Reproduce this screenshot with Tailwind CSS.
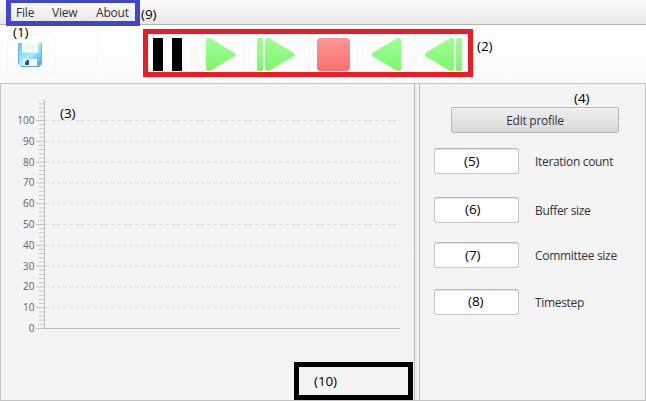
<!DOCTYPE html>
<html lang="en">
<head>
<meta charset="utf-8">
<title>Simulation</title>
<script src="https://cdn.jsdelivr.net/npm/@tailwindcss/browser@4"></script>
</head>
<body class="relative flex h-[401px] w-[646px] flex-col overflow-hidden bg-[#fdfdfd] font-['Open_Sans','Noto_Sans',sans-serif] text-[12px] leading-4 text-[#333]">
  <!-- Menu bar -->
  <nav class="flex h-[25px] shrink-0 items-center border-b border-[#b5b5b5] bg-linear-to-b from-[#fdfdfd] to-[#e7e7e7] pl-4 pt-[2px]">
    <span class="w-9 tracking-[-0.2px]">File</span>
    <span class="w-11 tracking-[-0.2px]">View</span>
    <span class="tracking-[-0.2px]">About</span>
  </nav>

  <!-- Toolbar -->
  <div class="flex h-[58px] shrink-0 items-center bg-linear-to-b from-white to-[#fbfbfb] pl-[7px]">
    <button class="flex h-10 w-12 items-center justify-center rounded-sm border border-[#f7f7f7]">
      <svg class="-ml-[2px] mt-px" width="24" height="25" viewBox="0 0 24 25">
        <defs>
          <linearGradient id="disk" x1="0" y1="0" x2="1" y2="1"><stop offset="0" stop-color="#6fbde9"/><stop offset=".5" stop-color="#a5f0fc"/><stop offset="1" stop-color="#4a9be0"/></linearGradient>
        </defs>
        <path d="M0 1h24v21l-3 3H3l-3-3z" fill="url(#disk)"/>
        <path d="M.5 1v21M23.500 1v20" stroke="#68b8ea"/>
        <path d="M4 0h16v10.500H4z" fill="#f9fdff"/>
        <path d="M5 3.500h14M5 5.500h14M5 7.500h14" stroke="#e6f2f7"/>
        <path d="M5 17h14v7H5z" fill="#fafdff"/>
        <path d="M7 20l2-2h2v5H7z" fill="#2855ac"/>
        <path d="M3 24.500h18" stroke="#5aa9e0"/>
      </svg>
    </button>
    <div class="ml-[42px] h-12 w-px bg-[#f8f8f8]"></div>
    <svg class="ml-[46px]" width="329" height="48" viewBox="144 30 329 48">
      <defs>
        <linearGradient id="green" x1="0" y1="0" x2="0" y2="1"><stop offset="0" stop-color="#a0ff96"/><stop offset="1" stop-color="#7cf76c"/></linearGradient>
        <linearGradient id="red" x1="0" y1="0" x2="0" y2="1"><stop offset="0" stop-color="#ff9696"/><stop offset="1" stop-color="#f97070"/></linearGradient>
      </defs>
      <g fill="none" stroke="#f7f7f7">
        <path d="M191.500 35v38M196.500 35v38M244.500 35v38M249.500 35v38M304.500 35v38M309.500 35v38M357.500 35v38M362.500 35v38M410.500 35v38M415.500 35v38"/>
      </g>
      <path d="M153 38h10v33h-10zM172 38h10v33h-10z" fill="#000"/>
      <path d="M206 40.500Q206 38 208.500 38Q210.200 38 211.500 39L234 52.500Q237 54.500 234 56.500L211.500 70Q210.200 71 208.500 71Q206 71 206 68.500Z" fill="url(#green)"/>
      <rect x="257" y="38" width="6" height="33" rx="1.500" fill="url(#green)"/>
      <path d="M265 40.500Q265 38 267.500 38Q269.200 38 270.500 39L293 52.500Q296.500 54.500 293 56.500L270.500 70Q269.200 71 267.500 71Q265 71 265 68.500Z" fill="url(#green)"/>
      <rect x="317" y="38" width="33" height="33" rx="3.500" fill="url(#red)"/>
      <path d="M401 40.500Q401 38 398.500 38Q396.800 38 395.500 39L373 52.500Q370.500 54.500 373 56.500L395.500 70Q396.800 71 398.500 71Q401 71 401 68.500Z" fill="url(#green)"/>
      <path d="M454 40.500Q454 38 451.500 38Q449.800 38 448.500 39L426 52.500Q423.500 54.500 426 56.500L448.500 70Q449.800 71 451.500 71Q454 71 454 68.500Z" fill="url(#green)"/>
      <rect x="456" y="38" width="6" height="33" rx="1.500" fill="url(#green)"/>
    </svg>
  </div>

  <!-- Split pane -->
  <main class="flex h-[318px] border border-[#c4c4c4] bg-[#f4f4f4]">
    <section class="w-[413px]">
      <svg id="chart" width="413" height="316" viewBox="1 84 413 316" class="text-[10px]" fill="#606366"></svg>
    </section>
    <div class="w-[6px] border-x border-[#bdbdbd] bg-linear-to-r from-[#eaeaea] to-[#f7f7f7]"></div>
    <section class="flex-1 pl-[14px] pt-[23px] tracking-[-0.32px]">
      <button class="ml-[17px] flex h-[26px] w-[168px] items-center justify-center rounded-xs border border-[#b5b5b5] bg-linear-to-b from-[#efefef] to-[#d9d9d9] pt-[2px] tracking-[-0.25px] shadow-[inset_0_1px_0_#f9f9f9]">Edit profile</button>
      <div class="mt-[15px] flex h-[26px] items-center gap-4">
        <div class="h-[26px] w-[85px] rounded-[3px] border border-[#c6c6c6] border-t-[#b5b5b5] bg-white shadow-[inset_0_1px_1px_#e4e4e4]"></div><span class="mt-[2px]">Iteration count</span>
      </div>
      <div class="mt-[23px] flex h-[26px] items-center gap-4">
        <div class="h-[26px] w-[85px] rounded-[3px] border border-[#c6c6c6] border-t-[#b5b5b5] bg-white shadow-[inset_0_1px_1px_#e4e4e4]"></div><span class="mt-[2px]">Buffer size</span>
      </div>
      <div class="mt-[19px] flex h-[26px] items-center gap-4">
        <div class="h-[26px] w-[85px] rounded-[3px] border border-[#c6c6c6] border-t-[#b5b5b5] bg-white shadow-[inset_0_1px_1px_#e4e4e4]"></div><span class="mt-[2px]">Committee size</span>
      </div>
      <div class="mt-[21px] flex h-[26px] items-center gap-4">
        <div class="h-[26px] w-[85px] rounded-[3px] border border-[#c6c6c6] border-t-[#b5b5b5] bg-white shadow-[inset_0_1px_1px_#e4e4e4]"></div><span class="mt-[2px]">Timestep</span>
      </div>
    </section>
  </main>

  <!-- Callout frames and numbers laid over the window -->
  <div class="absolute left-[6px] top-0 h-[26px] w-[134px] border-[5px] border-t-[3px] border-[#3f48cc]"></div>
  <div class="absolute left-[143px] top-[29px] h-12 w-[330px] border-[5px] border-[#ed1c24]"></div>
  <div class="absolute left-[294px] top-[362px] h-[38px] w-[119px] border-[5px] border-black"></div>
  <div class="text-[13.5px] tracking-[-0.1px] text-black">
    <span class="absolute left-[13px] top-[24px]">(1)</span>
    <span class="absolute left-[477px] top-[38px]">(2)</span>
    <span class="absolute left-[60px] top-[105px]">(3)</span>
    <span class="absolute left-[574px] top-[90px]">(4)</span>
    <span class="absolute left-[464px] top-[153px]">(5)</span>
    <span class="absolute left-[465px] top-[201px]">(6)</span>
    <span class="absolute left-[465px] top-[247px]">(7)</span>
    <span class="absolute left-[468px] top-[293px]">(8)</span>
    <span class="absolute left-[141px] top-[6px]">(9)</span>
    <span class="absolute left-[314px] top-[373px]">(10)</span>
  </div>

  <script>
    // Value axis: 0 to 108 in steps of 2, labelled every 10
    const y = v => 328.5 - v * 2.08;
    let s = '';
    for (let v = 0; v <= 108; v += 2) {
      const major = v % 10 === 0;
      s += `<path d="M${major ? 36 : 39} ${y(v)}H44" stroke="${major ? '#c4c4c4' : '#c8c8c8'}"/>`;
      if (major) {
        if (v) s += `<path d="M45 ${y(v)}H400" stroke="#dedede" stroke-dasharray="4 2"/>`;
        s += `<text x="34.5" y="${Math.round(y(v) + 3.5)}" text-anchor="end">${v}</text>`;
      }
    }
    s += '<path d="M44.500 99V329M44 328.500H400" stroke="#bdbdbd" fill="none"/>';
    document.getElementById('chart').innerHTML = s;
  </script>
</body>
</html>
